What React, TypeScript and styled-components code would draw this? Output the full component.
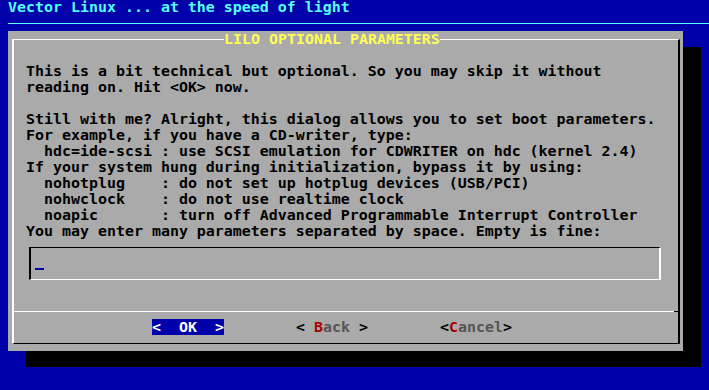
import React from 'react';
import styled, { createGlobalStyle } from 'styled-components';

const BLUE = '#0000aa';
const CYAN = '#55ffff';
const GRAY = '#aaaaaa';
const YELLOW = '#ffff55';
const RED = '#aa0000';
const DARK = '#555555';

const GlobalStyle = createGlobalStyle`
  html, body {
    margin: 0;
    padding: 0;
    background: ${BLUE};
    overflow: hidden;
  }
`;

// 80x25 text console, 9x16 cells; first row is clipped by a pixel in the capture
const Console = styled.div`
  width: 720px;
  height: 399px;
  margin-left: -1px;
  background: ${BLUE};
  font-family: 'DejaVu Sans Mono', 'Liberation Mono', monospace;
  font-weight: bold;
  font-size: 14.95px;
  line-height: 16px;
  white-space: pre;
`;

const Backtitle = styled.div`
  height: 15px;
  line-height: 15px;
  padding-left: 9px;
  color: ${CYAN};
`;

const Rule = styled.div`
  height: 16px;
  padding-left: 9px;
  display: flex;
  align-items: flex-start;
`;

const RuleLine = styled.div`
  flex: 1;
  height: 1px;
  margin-top: 8px;
  background: ${CYAN};
`;

const Dialog = styled.div`
  box-sizing: border-box;
  margin-left: 9px;
  width: 675px;
  height: 320px;
  padding: 8px 3px 7px 4px;
  display: flex;
  background: ${GRAY};
  box-shadow: 18px 16px 0 0 #000;
`;

const Frame = styled.div`
  flex: 1;
  display: flex;
  flex-direction: column;
  padding-bottom: 8px;
  border-top: 1px solid #fff;
  border-left: 2px solid #fff;
  border-right: 2px solid #000;
  border-bottom: 1px solid #000;
`;

const TitleRow = styled.div`
  height: 16px;
  margin-top: -9px;
  padding-left: 210px;
  display: flex;
`;

const Title = styled.span`
  background: ${GRAY};
  color: ${YELLOW};
`;

const Body = styled.div`
  padding: 16px 0 0 12px;
  height: 176px;
  color: #000;
`;

const InputBox = styled.div`
  box-sizing: border-box;
  width: 632px;
  height: 33px;
  margin: 8px 0 0 15px;
  padding: 20px 0 0 4px;
  border-top: 1px solid #000;
  border-left: 2px solid #000;
  border-right: 2px solid #fff;
  border-bottom: 1px solid #fff;
`;

const Cursor = styled.div`
  width: 9px;
  height: 2px;
  background: ${BLUE};
`;

const Separator = styled.div`
  margin-top: 31px;
  height: 1px;
  display: flex;
`;

const SepLine = styled.div<{ $dark?: boolean }>`
  flex: ${(p) => (p.$dark ? '0 0 4px' : '1')};
  background: ${(p) => (p.$dark ? '#000' : '#fff')};
`;

const ButtonRow = styled.div`
  margin-top: 7px;
  height: 16px;
  padding-left: 138px;
  display: flex;
  gap: 72px;
`;

const Button = styled.div<{ $active?: boolean }>`
  width: 72px;
  height: 16px;
  background: ${(p) => (p.$active ? BLUE : 'transparent')};
  color: ${(p) => (p.$active ? '#fff' : '#000')};
`;

const Hotkey = styled.span<{ $active?: boolean }>`
  color: ${(p) => (p.$active ? '#fff' : RED)};
`;

const Rest = styled.span<{ $active?: boolean }>`
  color: ${(p) => (p.$active ? '#fff' : DARK)};
`;

const text = [
  'This is a bit technical but optional. So you may skip it without',
  'reading on. Hit <OK> now.',
  '',
  'Still with me? Alright, this dialog allows you to set boot parameters.',
  'For example, if you have a CD-writer, type:',
  '  hdc=ide-scsi : use SCSI emulation for CDWRITER on hdc (kernel 2.4)',
  'If your system hung during initialization, bypass it by using:',
  '  nohotplug    : do not set up hotplug devices (USB/PCI)',
  '  nohwclock    : do not use realtime clock',
  '  noapic       : turn off Advanced Programmable Interrupt Controller',
  'You may enter many parameters separated by space. Empty is fine:',
].join('\n');

const buttons = [
  { left: '<  ', key: 'O', rest: 'K', right: '  >', active: true },
  { left: '< ', key: 'B', rest: 'ack', right: ' >', active: false },
  { left: '<', key: 'C', rest: 'ancel', right: '>', active: false },
];

export default function App() {
  return (
    <>
      <GlobalStyle />
      <Console>
        <Backtitle>Vector Linux ... at the speed of light</Backtitle>
        <Rule>
          <RuleLine />
        </Rule>
        <Dialog>
          <Frame>
            <TitleRow>
              <Title>LILO OPTIONAL PARAMETERS</Title>
            </TitleRow>
            <Body>{text}</Body>
            <InputBox>
              <Cursor />
            </InputBox>
            <Separator>
              <SepLine />
              <SepLine $dark />
            </Separator>
            <ButtonRow>
              {buttons.map((b) => (
                <Button key={b.key} $active={b.active}>
                  {b.left}
                  <Hotkey $active={b.active}>{b.key}</Hotkey>
                  <Rest $active={b.active}>{b.rest}</Rest>
                  {b.right}
                </Button>
              ))}
            </ButtonRow>
          </Frame>
        </Dialog>
      </Console>
    </>
  );
}
